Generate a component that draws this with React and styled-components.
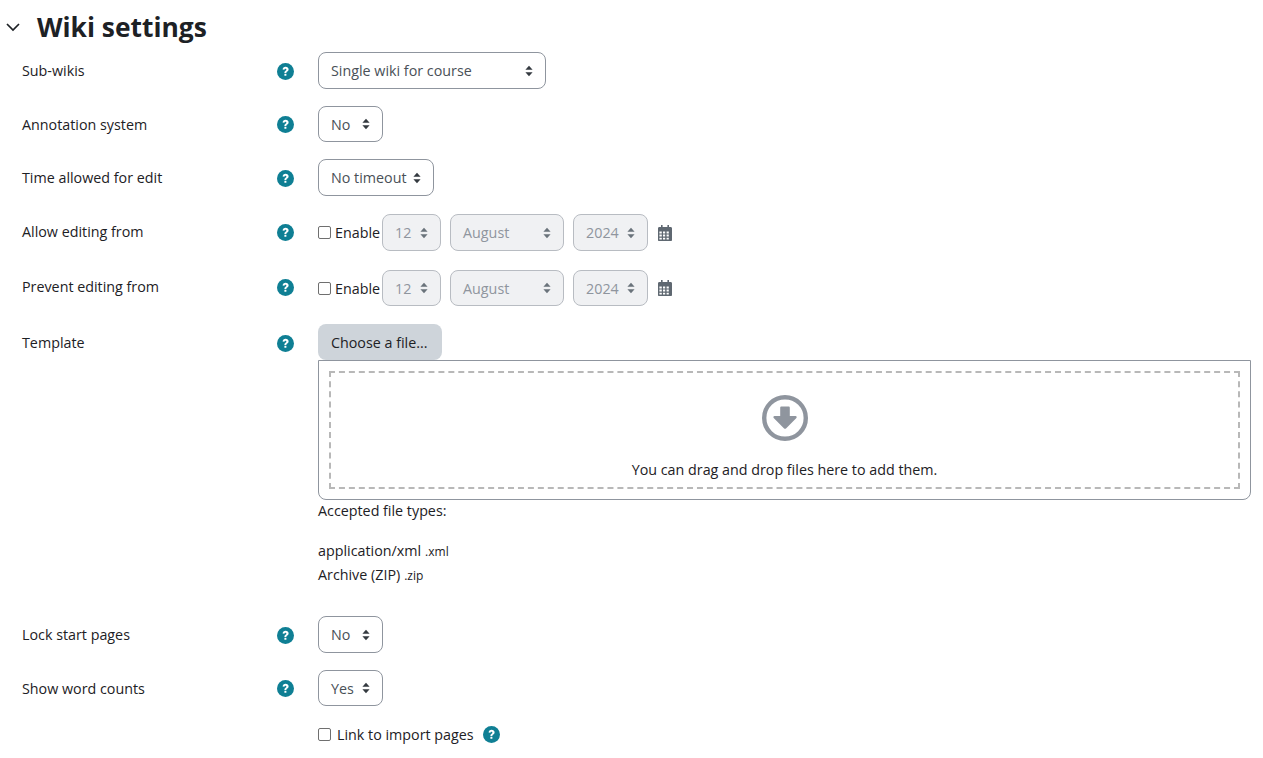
import React from 'react';
import styled, { createGlobalStyle } from 'styled-components';

const GlobalStyle = createGlobalStyle`
    html, body {
        margin: 0;
        padding: 0;
        background: #fff;
    }
    body {
        font-family: 'Open Sans', 'Noto Sans', 'Liberation Sans', sans-serif;
        font-size: 14.3px;
        color: #1d2125;
    }
`;

const Page = styled.div`
    width: 1263px;
    height: 758px;
    overflow: hidden;
    box-sizing: border-box;
    padding: 10px 12px 0 5px;
`;

const SectionHeader = styled.div`
    display: flex;
    align-items: center;
    height: 34px;
    margin-bottom: 8px;
`;

const Chevron = styled.svg`
    width: 16px;
    height: 16px;
    margin-right: 16px;
    color: #1d2125;
`;

const SectionTitle = styled.h3`
    margin: 0;
    font-size: 26.4px;
    font-weight: 700;
    line-height: 34px;
`;

const Row = styled.div`
    display: grid;
    grid-template-columns: 255px 41px 1fr;
    align-items: start;
    margin-bottom: ${(p) => p.$gap ?? 17}px;
    padding-left: 17px;
`;

const Label = styled.div`
    line-height: 20px;
    padding-top: ${(p) => p.$top ?? 9}px;
`;

const HelpCell = styled.div`
    padding-top: ${(p) => p.$top ?? 11}px;
    height: 17px;
`;

const HelpIcon = styled.svg`
    display: block;
    width: 17px;
    height: 17px;
`;

const Controls = styled.div`
    display: flex;
    align-items: center;
    min-width: 0;
`;

const Select = styled.div`
    box-sizing: border-box;
    display: flex;
    align-items: center;
    justify-content: space-between;
    width: ${(p) => p.$width}px;
    height: ${(p) => p.$height ?? 37}px;
    padding: 0 12px;
    margin-right: ${(p) => p.$after ?? 0}px;
    border: 1px solid ${(p) => (p.$disabled ? '#b8bcc2' : '#8f959e')};
    border-radius: 8px;
    background: ${(p) => (p.$disabled ? '#f0f1f3' : '#fff')};
    color: ${(p) => (p.$disabled ? '#8f959e' : '#495057')};
    white-space: nowrap;
`;

const Caret = styled.svg`
    width: 8px;
    height: 12px;
    flex: none;
    color: ${(p) => (p.$disabled ? '#6a737b' : '#343a40')};
`;

const Checkbox = styled.span`
    box-sizing: border-box;
    display: inline-block;
    width: 13px;
    height: 13px;
    flex: none;
    border: 1px solid #6f6f6f;
    border-radius: 2px;
    background: #fff;
`;

const CheckText = styled.span`
    margin-left: ${(p) => p.$left ?? 4}px;
    margin-right: ${(p) => p.$right ?? 2}px;
`;

const CalendarIcon = styled.svg`
    width: 14px;
    height: 16px;
    margin-left: 10px;
    color: #5f6871;
`;

const FilePicker = styled.div`
    flex: 1;
    min-width: 0;
`;

const ChooseButton = styled.div`
    box-sizing: border-box;
    position: relative;
    width: 124px;
    height: 36px;
    padding: 0 12px 0 13px;
    display: flex;
    align-items: center;
    border-radius: 8px;
    background: #ced4da;
    white-space: nowrap;
`;

const DropFrame = styled.div`
    box-sizing: border-box;
    height: 140px;
    padding: 10px;
    border: 1px solid #8f959e;
    border-radius: 0 0 8px 8px;
`;

const DropZone = styled.div`
    box-sizing: border-box;
    height: 118px;
    display: flex;
    flex-direction: column;
    align-items: center;
    padding-top: 22px;
    border: 2px dashed #b8b8b8;
`;

const DownloadIcon = styled.svg`
    display: block;
    width: 46px;
    height: 46px;
    color: #8f959e;
`;

const DropText = styled.div`
    margin-top: 19px;
    line-height: 20px;
`;

const TypesTitle = styled.div`
    margin-top: 1px;
    line-height: 20px;
`;

const TypesList = styled.div`
    margin-top: 18px;
    line-height: 23px;
`;

const Extension = styled.small`
    font-size: 12px;
    margin-left: 4px;
`;

const Help = (props) => (
    <HelpIcon viewBox="0 0 17 17" {...props}>
        <circle cx="8.5" cy="8.5" r="8.5" fill="#0f7f94" />
        <path d="M5.600 6.600c0-1.700 1.300-2.800 3-2.800 1.700 0 3 1 3 2.500 0 1.200-.6 1.800-1.400 2.300-.6.400-.8.700-.8 1.300H7.400c0-1.100.4-1.700 1.100-2.200.6-.4.900-.6.900-1.200 0-.5-.4-.8-.9-.8-.6 0-1 .4-1 1l-1.900-.1z" fill="#fff" />
        <rect x="7.400" y="10.700" width="2" height="2.100" rx="0.300" fill="#fff" />
    </HelpIcon>
);

const SortCaret = ({ disabled }) => (
    <Caret viewBox="0 0 8 12" $disabled={disabled}>
        <path d="M4 .8 7.600 4.800H.4zM4 11.200.4 7.200h7.200z" fill="currentColor" />
    </Caret>
);

const Dropdown = ({ children, disabled, ...rest }) => (
    <Select $disabled={disabled} {...rest}>
        <span>{children}</span>
        <SortCaret disabled={disabled} />
    </Select>
);

const Calendar = () => (
    <CalendarIcon viewBox="0 0 14 16">
        <path
            fill="currentColor"
            fillRule="evenodd"
            d="M3 0h1.600v2h4.800V0H11v2h1.600c.8 0 1.400.6 1.400 1.400V15c0 .6-.5 1-1 1H1c-.6 0-1-.4-1-1V3.400C0 2.600.6 2 1.400 2H3V0zM1.400 6.400v2h2.400v-2H1.400zm3.600 0v2h2.200v-2H5zm3.600 0v2h2.200v-2H8.600zM1.400 9.600v2h2.400v-2H1.400zm3.600 0v2h2.200v-2H5zm3.600 0v2h2.200v-2H8.600zM1.400 12.800v1.800h2.400v-1.800H1.400zm3.600 0v1.800h2.200v-1.800H5zm3.600 0v1.800h2.200v-1.800H8.600z"
        />
    </CalendarIcon>
);

const DateRow = ({ label, height, gap, top }) => (
    <Row $gap={gap}>
        <Label $top={top}>{label}</Label>
        <HelpCell $top={top + 2}><Help /></HelpCell>
        <Controls>
            <Checkbox />
            <CheckText>Enable</CheckText>
            <Dropdown disabled $width={59} $height={height} $after={9}>12</Dropdown>
            <Dropdown disabled $width={114} $height={height} $after={9}>August</Dropdown>
            <Dropdown disabled $width={75} $height={height}>2024</Dropdown>
            <Calendar />
        </Controls>
    </Row>
);

const App = () => {
    return (
        <Page>
            <GlobalStyle />
            <SectionHeader>
                <Chevron viewBox="0 0 16 16">
                    <path d="M2 5l6 6 6-6" fill="none" stroke="currentColor" strokeWidth="1.700" />
                </Chevron>
                <SectionTitle>Wiki settings</SectionTitle>
            </SectionHeader>

            <Row>
                <Label>Sub-wikis</Label>
                <HelpCell><Help /></HelpCell>
                <Controls><Dropdown $width={228}>Single wiki for course</Dropdown></Controls>
            </Row>
            <Row>
                <Label>Annotation system</Label>
                <HelpCell $top={10}><Help /></HelpCell>
                <Controls><Dropdown $width={65} $height={36}>No</Dropdown></Controls>
            </Row>
            <Row $gap={18}>
                <Label>Time allowed for edit</Label>
                <HelpCell><Help /></HelpCell>
                <Controls><Dropdown $width={116}>No timeout</Dropdown></Controls>
            </Row>
            <DateRow label="Allow editing from" height={37} gap={19} top={8} />
            <DateRow label="Prevent editing from" height={36} gap={18} top={7} />

            <Row $gap={29}>
                <Label>Template</Label>
                <HelpCell><Help /></HelpCell>
                <FilePicker>
                    <ChooseButton>Choose a file...</ChooseButton>
                    <DropFrame>
                        <DropZone>
                            <DownloadIcon viewBox="0 0 46 46">
                                <circle cx="23" cy="23" r="20.800" fill="none" stroke="currentColor" strokeWidth="4.400" />
                                <path d="M19.400 11.500h7.200c.7 0 1.200.5 1.200 1.200v8.300h5.800c1 0 1.500 1.200.8 1.900L24 33.400c-.5.5-1.400.5-1.900 0L11.700 22.900c-.7-.7-.2-1.900.8-1.900h5.700v-8.300c0-.7.500-1.200 1.200-1.200z" fill="currentColor" />
                            </DownloadIcon>
                            <DropText>You can drag and drop files here to add them.</DropText>
                        </DropZone>
                    </DropFrame>
                    <TypesTitle>Accepted file types:</TypesTitle>
                    <TypesList>
                        <div>application/xml<Extension>.xml</Extension></div>
                        <div>Archive (ZIP)<Extension>.zip</Extension></div>
                    </TypesList>
                </FilePicker>
            </Row>

            <Row>
                <Label>Lock start pages</Label>
                <HelpCell><Help /></HelpCell>
                <Controls><Dropdown $width={65}>No</Dropdown></Controls>
            </Row>
            <Row $gap={19}>
                <Label>Show word counts</Label>
                <HelpCell $top={10}><Help /></HelpCell>
                <Controls><Dropdown $width={65} $height={36}>Yes</Dropdown></Controls>
            </Row>
            <Row>
                <div />
                <div />
                <Controls>
                    <Checkbox />
                    <CheckText $left={6} $right={9}>Link to import pages</CheckText>
                    <Help />
                </Controls>
            </Row>
        </Page>
    );
};

export default App;
